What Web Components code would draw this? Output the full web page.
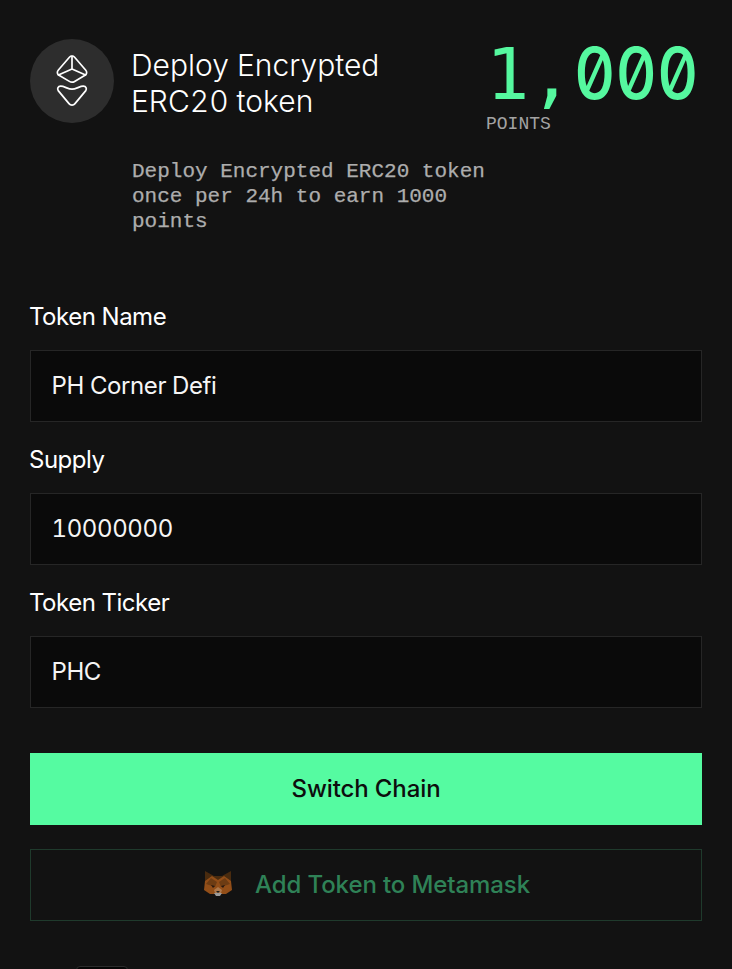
<!DOCTYPE html>
<html>
<head>
<meta charset="utf-8">
<title>Deploy Encrypted ERC20 token</title>
<style>
  html, body { margin: 0; height: 100%; background: #121212; overflow: hidden; }
  body { font-family: Inter, "Liberation Sans", sans-serif; color: #fff; }
</style>
</head>
<body>
<task-page>
  <task-header points-lead="1," points-rest="000">
    <span slot="title">Deploy Encrypted ERC20 token</span>
    Deploy Encrypted ERC20 token once per 24h to earn 1000 points
  </task-header>
  <token-field label="Token Name">PH Corner Defi</token-field>
  <token-field label="Supply">10000000</token-field>
  <token-field label="Token Ticker">PHC</token-field>
  <action-button variant="primary">Switch Chain</action-button>
  <action-button variant="outline" fox>Add Token to Metamask</action-button>
</task-page>

<script>
customElements.define('task-page',
  class extends HTMLElement {
    constructor () {
      super()
      this.attachShadow({ mode: 'open' }).innerHTML = `
<style>
  :host { display: block; height: 969px; box-sizing: border-box; padding: 39px 30px 0; position: relative; overflow: hidden; }
  .peek { position: absolute; left: 76px; top: 966px; width: 52px; height: 12px; box-sizing: border-box;
    border: 1px solid #2c2c2c; border-radius: 4px; background: #050505; }
</style>
<slot></slot>
<div class="peek"></div>`
    }
  }
)

customElements.define('task-header',
  class extends HTMLElement {
    constructor () {
      super()
      this.attachShadow({ mode: 'open' }).innerHTML = `
<style>
  :host { display: grid; grid-template-columns: 84px 336px 1fr; column-gap: 18px; height: 263px; align-content: start; }
  .icon { width: 84px; height: 84px; border-radius: 50%; background: #2d2d2d; display: flex; align-items: center; justify-content: center; }
  .title { font-size: 30px; line-height: 35.5px; font-weight: 300; padding-top: 9px; margin-left: -1px; font-variant-numeric: tabular-nums; }
  .score { font-family: "Liberation Mono", monospace; }
  .num { display: flex; align-items: baseline; font-size: 72px; line-height: 60px; height: 60px; padding-top: 4px; color: #55f89f; white-space: nowrap; }
  .lead { font-family: "DejaVu Sans Mono", monospace; letter-spacing: .5px; }
  .rest { display: inline-block; font-family: Inter, sans-serif; font-weight: 500; font-feature-settings: "zero", "tnum"; transform: scaleX(.89); transform-origin: left; }
  .unit { font-size: 18px; line-height: 22px; color: #a3a3a3; margin-top: 10px; }
  .desc { grid-column: 2 / 4; width: 362px; margin-top: 24px; font-family: "Liberation Mono", monospace; font-size: 21px; line-height: 25px; color: #adadad; -webkit-text-stroke: .25px #adadad; }
</style>
<div class="icon">
  <svg width="32" height="52" viewBox="0 0 32 52" fill="none" stroke="#fff" stroke-width="1.7" stroke-linejoin="round" stroke-linecap="round" style="overflow:visible">
    <path d="M13.4 2.2 C14.8 .6 17.2 .6 18.6 2.2 L29.6 15 C31.2 16.8 31 19 29 20.2 L18.6 26.4 C17 27.4 15 27.4 13.4 26.4 L3 20.2 C1 19 .8 16.8 2.4 15 Z"/>
    <path d="M16 1.4 V14 M16 14 L2.4 20 M16 14 L29.6 20"/>
    <path d="M4.6 31.2 C8 31 12 34.2 16 34.2 C20 34.2 24 31 27.4 31.2 C30 31.4 31 33.6 29.8 35.6 L19 48.6 C17.4 50.6 14.6 50.6 13 48.6 L2.2 35.6 C1 33.6 2 31.4 4.6 31.2 Z"/>
  </svg>
</div>
<div class="title"><slot name="title"></slot></div>
<div class="score">
  <div class="num"><span class="lead">${this.getAttribute('points-lead')}</span><span class="rest">${this.getAttribute('points-rest')}</span></div>
  <div class="unit">POINTS</div>
</div>
<div class="desc"><slot></slot></div>`
    }
  }
)

customElements.define('token-field',
  class extends HTMLElement {
    constructor () {
      super()
      this.attachShadow({ mode: 'open' }).innerHTML = `
<style>
  :host { display: block; margin-bottom: 23px; }
  .label { font-size: 24px; line-height: 29px; font-weight: 400; color: #fff; margin: 0 0 19px -1px; letter-spacing: -.5px; }
  .box { height: 72px; box-sizing: border-box; background: #0a0a0a; border: 1px solid #262626; padding: 0 20.5px 1px; display: flex; align-items: center;
    font-size: 24px; color: #f5f5f5; letter-spacing: -.4px; font-variant-numeric: tabular-nums; }
</style>
<div class="label">${this.getAttribute('label')}</div>
<div class="box"><slot></slot></div>`
    }
  }
)

customElements.define('action-button',
  class extends HTMLElement {
    constructor () {
      super()
      const fox = this.hasAttribute('fox') ? `
<svg width="28" height="26" viewBox="0 0 28 26" style="opacity:.85">
  <path fill="#53300f" d="M1 0 L10 5 H18 L27 0 L27 12 H1 Z"/>
  <path fill="#a9591a" d="M1 10 L8 5 L14 9 L20 5 L27 10 L28 19 L22 23 H6 L0 19 Z"/>
  <path fill="#7e4414" d="M7 7 L13 11 L11 16 L2 13 Z M21 7 L15 11 L17 16 L26 13 Z"/>
  <path fill="#2a1a10" d="M7 14 L11 15 L9 17 Z M21 14 L17 15 L19 17 Z"/>
  <path fill="#c98a55" d="M10 19 L14 16 L18 19 L17 22 H11 Z"/>
  <path fill="#b4b4b4" d="M10 22 H18 L16 25 H12 Z"/>
  <path fill="#1c1c1c" d="M12 20 H16 L14 22 Z"/>
</svg>` : ''
      this.attachShadow({ mode: 'open' }).innerHTML = `
<style>
  :host { display: flex; height: 72px; box-sizing: border-box; align-items: center; justify-content: center; gap: 23px; font-size: 24px; font-weight: 500; letter-spacing: -.1px; padding-bottom: 2px; }
  :host([variant="primary"]) { background: #55fba1; color: #0d0d0d; margin-top: 45px; margin-bottom: 24px; }
  :host([variant="outline"]) { border: 1px solid #1f3a2c; color: #2f8257; padding-left: 2px; }
</style>
${fox}<slot></slot>`
    }
  }
)
</script>
</body>
</html>
